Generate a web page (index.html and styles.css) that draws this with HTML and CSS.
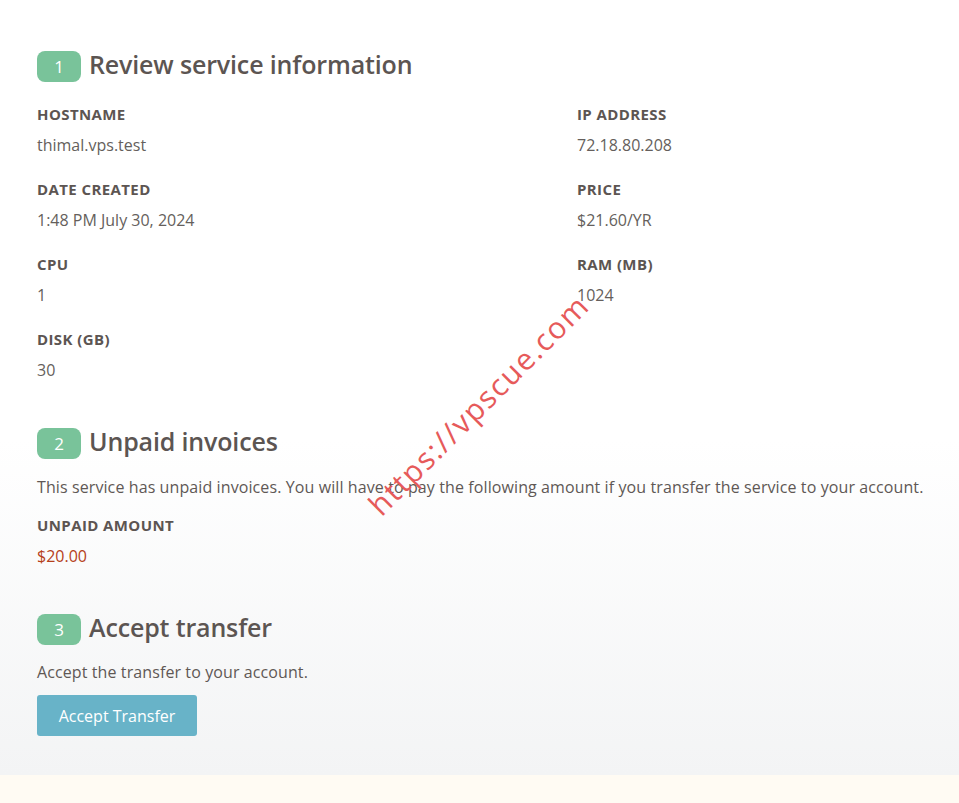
FILE: index.html
```html
<!DOCTYPE html>
<html>
<head>
<meta charset="utf-8">
<link rel="stylesheet" href="styles.css">
</head>
<body>
<main class="page">
  <section class="step">
    <h2 class="step-title"><span class="badge">1</span><span class="title-text">Review service information</span></h2>
    <div class="info-grid">
      <div class="field"><div class="label">HOSTNAME</div><div class="value">thimal.vps.test</div></div>
      <div class="field"><div class="label">IP ADDRESS</div><div class="value">72.18.80.208</div></div>
      <div class="field"><div class="label">DATE CREATED</div><div class="value">1:48 PM July 30, 2024</div></div>
      <div class="field"><div class="label">PRICE</div><div class="value">$21.60/YR</div></div>
      <div class="field"><div class="label">CPU</div><div class="value">1</div></div>
      <div class="field"><div class="label">RAM (MB)</div><div class="value">1024</div></div>
      <div class="field"><div class="label">DISK (GB)</div><div class="value">30</div></div>
    </div>
  </section>
  <section class="step">
    <h2 class="step-title"><span class="badge">2</span><span class="title-text">Unpaid invoices</span></h2>
    <p class="text">This service has unpaid invoices. You will have to pay the following amount if you transfer the service to your account.</p>
    <div class="field"><div class="label">UNPAID AMOUNT</div><div class="value amount">$20.00</div></div>
  </section>
  <section class="step">
    <h2 class="step-title"><span class="badge">3</span><span class="title-text">Accept transfer</span></h2>
    <p class="text">Accept the transfer to your account.</p>
    <button class="btn">Accept Transfer</button>
  </section>
</main>
<footer class="footer"></footer>
<div class="watermark">https://vpscue.com</div>
</body>
</html>
```
FILE: styles.css
```css
html, body {
  margin: 0;
  padding: 0;
}
body {
  font-family: "Open Sans", "Noto Sans", sans-serif;
  color: #5f5855;
  background: #fffbf3;
  position: relative;
  width: 959px;
  height: 803px;
  overflow: hidden;
}
.page {
  height: 775px;
  box-sizing: border-box;
  padding: 51px 20px 0 37px;
  background: linear-gradient(to bottom, #ffffff 0px, #ffffff 440px, #f3f4f5 775px);
}
.step-title {
  display: flex;
  align-items: center;
  margin: 0;
  font-size: 25px;
  font-weight: 600;
  color: #5c5552;
  height: 31px;
  letter-spacing: -0.15px;
}
.title-text {
  line-height: 30px;
  padding-bottom: 5px;
}
.badge {
  display: inline-flex;
  align-items: center;
  justify-content: center;
  width: 44px;
  height: 31px;
  border-radius: 8px;
  background: #79c39a;
  color: #fff;
  font-size: 17px;
  font-weight: 400;
  margin-right: 8px;
  letter-spacing: 0;
}
.info-grid {
  display: grid;
  grid-template-columns: 540px 1fr;
  row-gap: 25px;
  margin-top: 23px;
}
.field {
  display: flex;
  flex-direction: column;
}
.label {
  font-size: 15px;
  font-weight: 700;
  color: #5c5552;
  line-height: 18px;
  letter-spacing: 0.4px;
}
.value {
  font-size: 16px;
  line-height: 20px;
  margin-top: 12px;
  color: #655f5c;
}
.amount {
  color: #b5401a;
}
.step + .step {
  margin-top: 48px;
}
.text {
  font-size: 16px;
  line-height: 20px;
  letter-spacing: 0.1px;
  white-space: nowrap;
  color: #5f5855;
  margin: 18px 0 19px 0;
}
.step:nth-child(3) .text {
  margin: 17px 0 13px 0;
}
.btn {
  display: block;
  width: 160px;
  height: 41px;
  border: none;
  border-radius: 3px;
  background: #68b3c8;
  color: #fff;
  font-family: inherit;
  font-size: 16px;
  padding: 0;
}
.footer {
  height: 28px;
  background: #fffbf3;
}
.watermark {
  position: absolute;
  left: 330px;
  top: 384px;
  font-family: "Open Sans", sans-serif;
  font-size: 30px;
  letter-spacing: 1.6px;
  color: #e65a5a;
  transform: rotate(-45deg);
  transform-origin: center;
  white-space: nowrap;
}
```
